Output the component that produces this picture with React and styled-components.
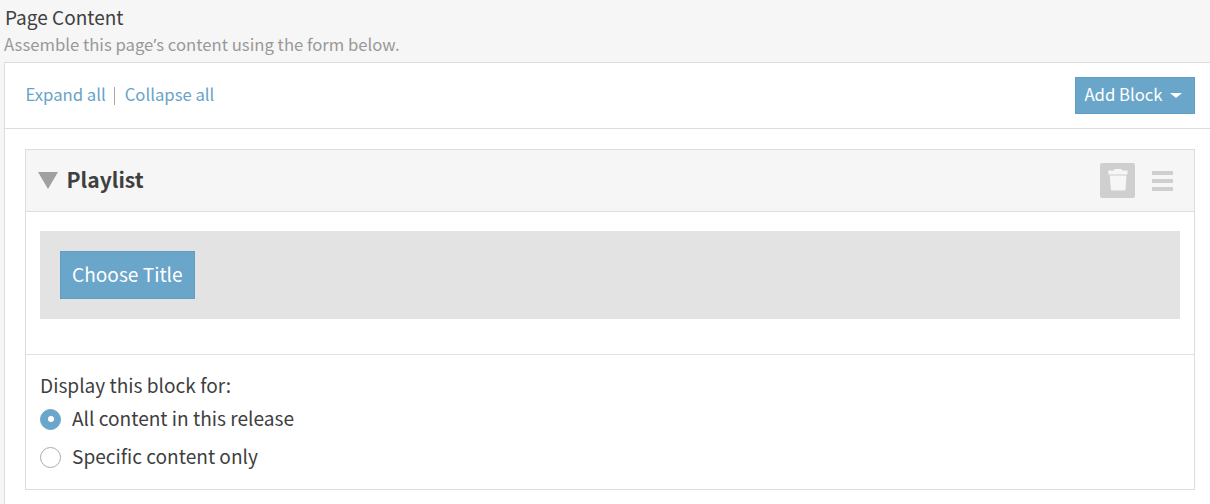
import styled, { createGlobalStyle } from "styled-components";

const GlobalStyle = createGlobalStyle`
  html, body {
    margin: 0;
    padding: 0;
    height: 504px;
    overflow: hidden;
    background: #f6f6f6;
  }
  * {
    box-sizing: border-box;
  }
  body {
    font-family: "Noto Sans CJK SC", "Open Sans", sans-serif;
    color: #3f3f3f;
  }
`;

const Page = styled.div`
  width: 1210px;
  height: 504px;
  overflow: hidden;
  padding-left: 4px;
`;
const PageHead = styled.div`
  height: 62px;
  padding: 4px 0 0 1px;
`;
const PageTitle = styled.div`
  font-size: 19px;
  line-height: 26px;
`;
const PageHint = styled.div`
  font-size: 16.7px;
  line-height: 24px;
  margin-top: 2px;
  margin-left: -1px;
  color: #999;
`;
const Apostrophe = styled.span`
  font-family: "Noto Sans", sans-serif;
`;
const Card = styled.div`
  width: 1210px;
  height: 442px;
  background: #fff;
  border: 1px solid #ddd;
  border-bottom: 0;
`;
const Toolbar = styled.div`
  display: flex;
  align-items: center;
  width: 1190px;
  height: 65px;
  padding: 0 0 0 20.5px;
`;
const ToolbarLink = styled.a`
  font-size: 16.7px;
  line-height: 24px;
  margin-bottom: 3px;
  color: #67a3c9;
`;
const Divider = styled.span`
  width: 1px;
  height: 18px;
  margin: 0 9.5px 0 8.5px;
  background: #aaa;
`;
const Button = styled.button`
  display: flex;
  align-items: center;
  justify-content: center;
  height: ${(p) => p.$height}px;
  padding: 0 11px 3px;
  margin: 0;
  font-family: inherit;
  font-size: ${(p) => p.$size}px;
  color: #fff;
  background: #6aa5ca;
  border: 1px solid #619dc5;
  border-radius: 0;
`;
const AddButton = styled(Button)`
  margin-left: auto;
  width: 120px;
  padding: 0 4px 3px 0;
`;
const Caret = styled.span`
  width: 0;
  height: 0;
  margin: 3px 0 0 7px;
  border-left: 6px solid transparent;
  border-right: 6px solid transparent;
  border-top: 5px solid #fff;
`;
const CardBody = styled.div`
  border-top: 1px solid #ddd;
  padding: 20px 0 0 20px;
`;
const Block = styled.div`
  width: 1170px;
  height: 341px;
  border: 1px solid #ddd;
`;
const BlockHead = styled.div`
  display: flex;
  align-items: center;
  height: 62px;
  padding: 0 21px 0 12px;
  background: #f6f6f6;
  border-bottom: 1px solid #ddd;
`;
const Triangle = styled.span`
  width: 0;
  height: 0;
  margin-right: 8.5px;
  border-left: 10.5px solid transparent;
  border-right: 10.5px solid transparent;
  border-top: 17px solid #a0a0a0;
`;
const BlockTitle = styled.div`
  flex: 1;
  font-size: 21.1px;
  font-weight: 700;
  line-height: 30px;
  padding-bottom: 3px;
`;
const TrashBox = styled.div`
  display: flex;
  align-items: center;
  justify-content: center;
  width: 35px;
  height: 35px;
  padding-bottom: 2px;
  margin-right: 17px;
  background: #cfcfcf;
  border-radius: 2px;
`;
const Handle = styled.div`
  display: flex;
  flex-direction: column;
  gap: 4px;
  width: 21px;
`;
const HandleBar = styled.span`
  height: 4px;
  background: #cfcfcf;
`;
const TitleSection = styled.div`
  height: 143px;
  padding: 19px 14px 0;
  border-bottom: 1px solid #e3e3e3;
`;
const TitlePanel = styled.div`
  display: flex;
  align-items: center;
  height: 88px;
  padding-left: 20px;
  background: #e3e3e3;
`;
const DisplaySection = styled.div`
  padding: 17px 14px 0;
`;
const DisplayLabel = styled.div`
  font-size: 19.1px;
  line-height: 26px;
  margin-bottom: 2px;
`;
const RadioRow = styled.label`
  display: flex;
  align-items: center;
  height: 38px;
  font-size: 19.1px;
`;
const RadioMark = styled.span`
  display: flex;
  align-items: center;
  justify-content: center;
  width: 21px;
  height: 21px;
  margin-right: 11px;
  border-radius: 50%;
  background: ${(p) => (p.$on ? "#6aa5ca" : "#fff")};
  border: 1px solid ${(p) => (p.$on ? "#6aa5ca" : "#aaa")};
`;
const RadioDot = styled.span`
  width: 6px;
  height: 6px;
  border-radius: 50%;
  background: #fff;
`;
const RadioText = styled.span`
  padding-bottom: 3px;
`;

function TrashIcon() {
  return (
    <svg width="20" height="22" viewBox="0 0 20 22">
      <path d="M6.500 0h7l.5 1.500h5.500v4H.3v-4H6z" fill="#f6f6f6" />
      <path d="M1.800 6.500h16.700l-1 13.500c-.1 1-.7 1.500-1.600 1.500H4.500c-.9 0-1.500-.5-1.600-1.500z" fill="#f6f6f6" />
    </svg>
  );
}

export default function App() {
  return (
    <>
      <GlobalStyle />
      <Page>
        <PageHead>
          <PageTitle>Page Content</PageTitle>
          <PageHint>
            Assemble this page<Apostrophe>’</Apostrophe>s content using the form below.
          </PageHint>
        </PageHead>
        <Card>
          <Toolbar>
            <ToolbarLink>Expand all</ToolbarLink>
            <Divider />
            <ToolbarLink>Collapse all</ToolbarLink>
            <AddButton $height={37} $size={16.7}>
              Add Block
              <Caret />
            </AddButton>
          </Toolbar>
          <CardBody>
            <Block>
              <BlockHead>
                <Triangle />
                <BlockTitle>Playlist</BlockTitle>
                <TrashBox>
                  <TrashIcon />
                </TrashBox>
                <Handle>
                  <HandleBar />
                  <HandleBar />
                  <HandleBar />
                </Handle>
              </BlockHead>
              <TitleSection>
                <TitlePanel>
                  <Button $height={48} $size={19.1}>Choose Title</Button>
                </TitlePanel>
              </TitleSection>
              <DisplaySection>
                <DisplayLabel>Display this block for:</DisplayLabel>
                <RadioRow>
                  <RadioMark $on>
                    <RadioDot />
                  </RadioMark>
                  <RadioText>All content in this release</RadioText>
                </RadioRow>
                <RadioRow>
                  <RadioMark />
                  <RadioText>Specific content only</RadioText>
                </RadioRow>
              </DisplaySection>
            </Block>
          </CardBody>
        </Card>
      </Page>
    </>
  );
}
